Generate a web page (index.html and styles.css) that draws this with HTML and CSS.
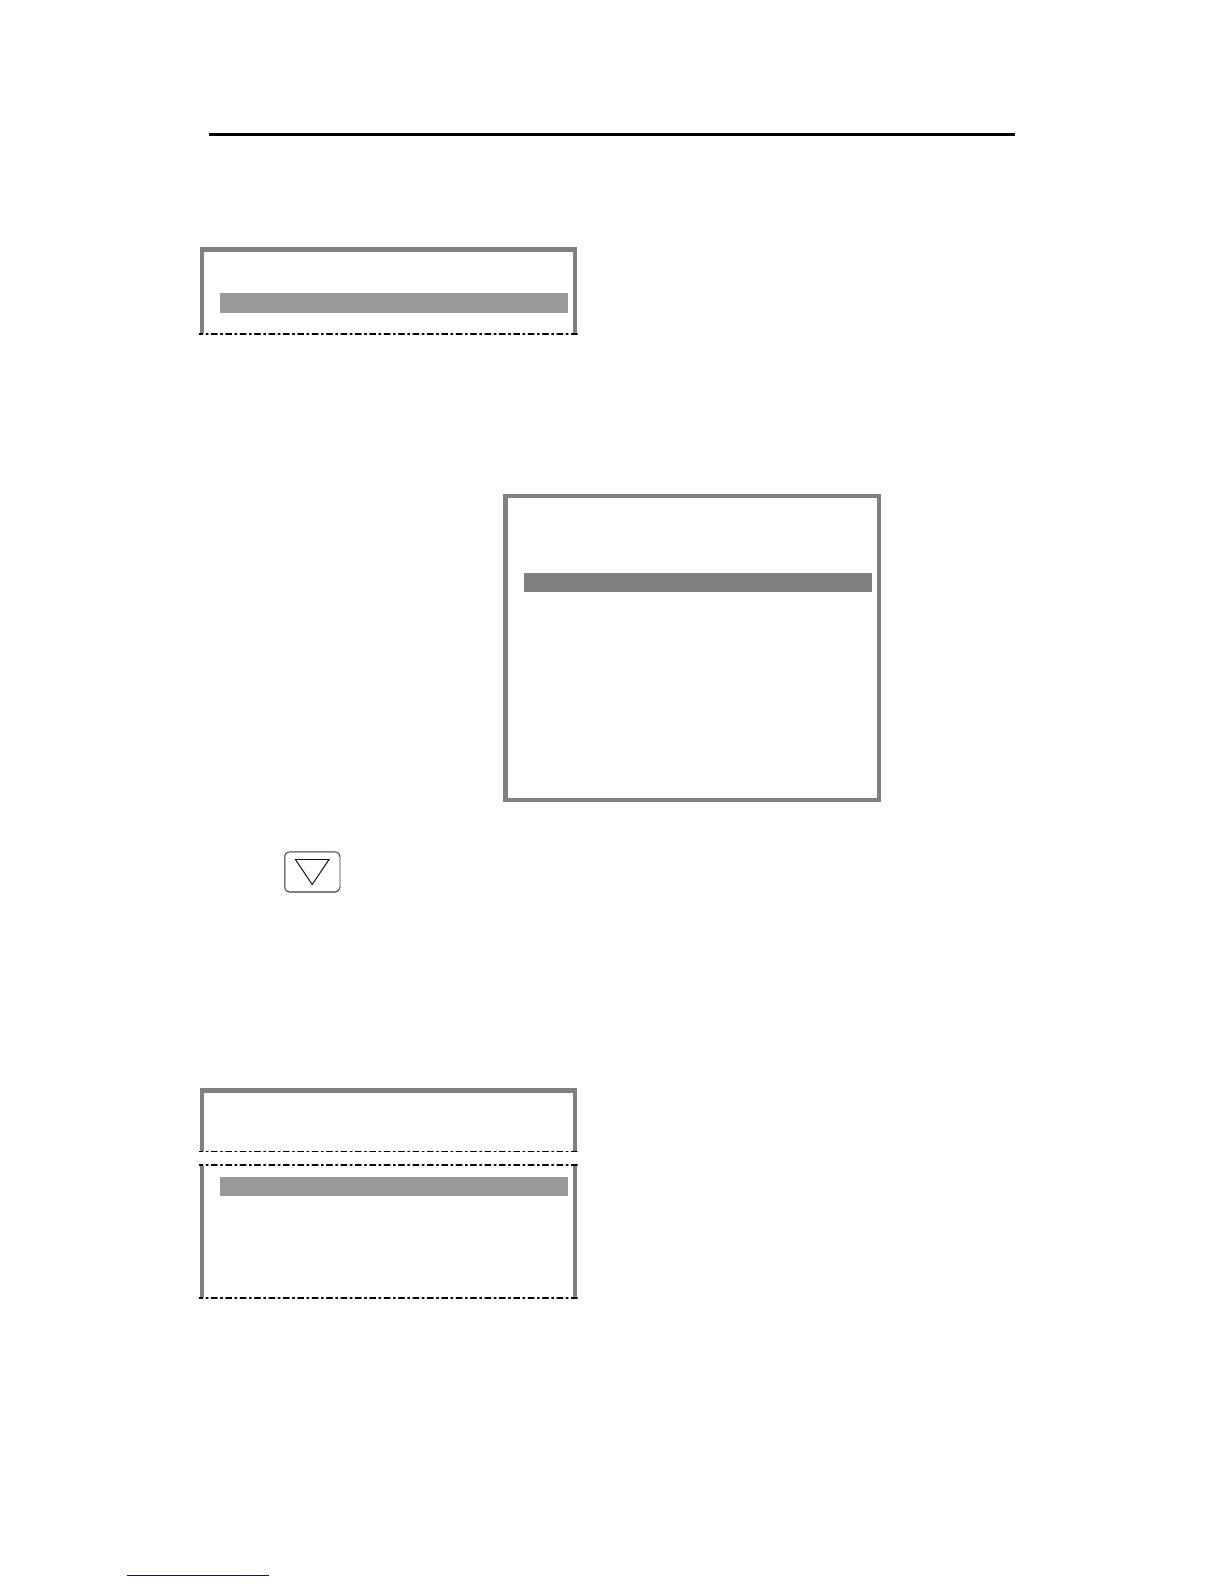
FILE: index.html
```html
<!DOCTYPE html>
<html lang="en">
<head>
    <meta charset="UTF-8">
    <meta name="viewport" content="width=device-width, initial-scale=1.0">
    <title>Manual</title>
    <link rel="stylesheet" href="styles.css">
</head>
<body>
    <main class="page">
        <hr class="rule">

        <section class="screen screen-first">
            <div class="screen-body screen-top">
                <div class="highlight"></div>
            </div>
            <svg class="cut" height="2"><line class="cut-line" x1="0" y1="1" x2="100%" y2="1"/></svg>
        </section>

        <section class="menu">
            <div class="highlight highlight-dark"></div>
        </section>

        <button class="key" type="button" aria-label="Down">
            <svg width="57" height="42" viewBox="0 0 57 42">
                <rect x="0.8" y="0.8" width="55" height="40.2" rx="5" fill="#fff" stroke="#555" stroke-width="1.3"/>
                <path d="M55.8 6V36" stroke="#bbb" stroke-width="1.6"/>
                <path d="M11.5 8.5H45L28.2 33.5Z" fill="none" stroke="#111" stroke-width="1.2"/>
            </svg>
        </button>

        <section class="screen screen-second">
            <div class="screen-body screen-top screen-title"></div>
            <svg class="cut cut-thin" height="1"><line class="cut-line" x1="0" y1="0.5" x2="100%" y2="0.5"/></svg>
        </section>

        <!-- lower part of the same screen -->
        <section class="screen screen-rest">
            <svg class="cut" height="2"><line class="cut-line" x1="0" y1="1" x2="100%" y2="1"/></svg>
            <div class="screen-body screen-list">
                <div class="highlight"></div>
            </div>
            <svg class="cut" height="2"><line class="cut-line" x1="0" y1="1" x2="100%" y2="1"/></svg>
        </section>

        <footer>
            <a class="footer-link" href="#" aria-label="Contents"></a>
        </footer>
    </main>
</body>
</html>
```

FILE: styles.css
```css
* {
    box-sizing: border-box;
}
body {
    margin: 0;
    background-color: #fff;
    font-family: "Liberation Sans", Arial, sans-serif;
}
.page {
    max-width: 806px;
    margin: 0 auto;
    padding-top: 133px;
}
.rule {
    height: 3px;
    margin: 0;
    border: none;
    background-color: #000;
}
.screen {
    max-width: 377px;
    margin-left: -9px;
}
.screen-first {
    margin-top: 111px;
}
.screen-second {
    margin-top: 195px;
}
.screen-rest {
    margin-top: 12px;
}
.screen-body {
    border: 0 solid #808080;
    border-width: 0 4px;
    padding: 41px 5px 20px 16px;
}
.screen-top {
    border-top-width: 5px;
}
.screen-title {
    padding: 29px 0;
}
.screen-list {
    padding-top: 11px;
    padding-bottom: 101px;
}
.highlight {
    height: 20px;
    background-color: #999;
}
.screen-list .highlight {
    height: 19px;
}
.highlight-dark {
    height: 19px;
    background-color: #808080;
}
.cut {
    display: block;
    width: calc(100% + 2px);
    margin-left: -1px;
}
.cut-line {
    stroke: #000;
    stroke-width: 2;
    stroke-dasharray: 6.6 2.6 2.6 2.6;
    stroke-dashoffset: 2.4;
}
.cut-thin .cut-line {
    stroke-width: 1;
}
.menu {
    max-width: 378px;
    margin-top: 159px;
    margin-left: 294px;
    padding: 75px 5px 206px 16px;
    border: 4px solid #808080;
    border-left-width: 5px;
}
.key {
    display: block;
    margin: 49px 0 0 75px;
    padding: 0;
    border: none;
    background: none;
    cursor: pointer;
}
.key svg {
    display: block;
}
.footer-link {
    display: block;
    width: 142px;
    margin-top: 276px;
    margin-left: -82px;
    border-bottom: 1px solid #10108c;
}
```
